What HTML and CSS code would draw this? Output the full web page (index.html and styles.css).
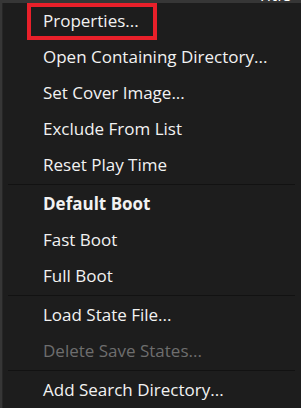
FILE: index.html
```html
<!DOCTYPE html>
<html lang="en">
<head>
  <meta charset="UTF-8">
  <title>Game List Context Menu</title>
  <link rel="stylesheet" href="styles.css">
</head>
<body>

  <div class="title-strip">
    <span class="title-text">Title</span>
  </div>

  <div class="menu">
    <div class="menu-item">Properties...</div>
    <div class="menu-item">Open Containing Directory...</div>
    <div class="menu-item">Set Cover Image...</div>
    <div class="menu-item">Exclude From List</div>
    <div class="menu-item">Reset Play Time</div>
    <div class="separator"></div>
    <div class="menu-item default">Default Boot</div>
    <div class="menu-item">Fast Boot</div>
    <div class="menu-item">Full Boot</div>
    <div class="separator"></div>
    <div class="menu-item">Load State File...</div>
    <div class="menu-item disabled">Delete Save States...</div>
    <div class="separator"></div>
    <div class="menu-item">Add Search Directory...</div>

    <!-- annotation box drawn over the first entry -->
    <div class="highlight"></div>
  </div>

</body>
</html>
```

FILE: styles.css
```css
    html, body {
      margin: 0;
      padding: 0;
      background: #363636;
      font-family: 'Open Sans', sans-serif;
      color: #f2f2f2;
      overflow: hidden;
      height: 100%;
    }

    .title-strip {
      height: 3px;
      overflow: hidden;
      display: flex;
      justify-content: flex-end;
      padding-right: 10px;
    }

    .title-text {
      font-size: 17px;
      line-height: 17px;
      margin-top: -14px;
      color: #fff;
    }

    .menu {
      position: relative;
      margin-left: 2px;
      height: 405px;
      background: #1d1d1d;
      border-left: 1px solid #262626;
    }

    .menu-item {
      height: 36px;
      line-height: 36px;
      padding-left: 40px;
      font-size: 17px;
      white-space: nowrap;
    }

    .menu-item.default {
      font-weight: 700;
    }

    .menu-item.disabled {
      color: #6e6e6e;
    }

    .separator {
      height: 1px;
      margin: 1px 6px 1px 5px;
      background: #121212;
    }

    .highlight {
      position: absolute;
      top: 0;
      left: 24px;
      width: 122px;
      height: 29px;
      border: 4px solid #e8202a;
    }
```
